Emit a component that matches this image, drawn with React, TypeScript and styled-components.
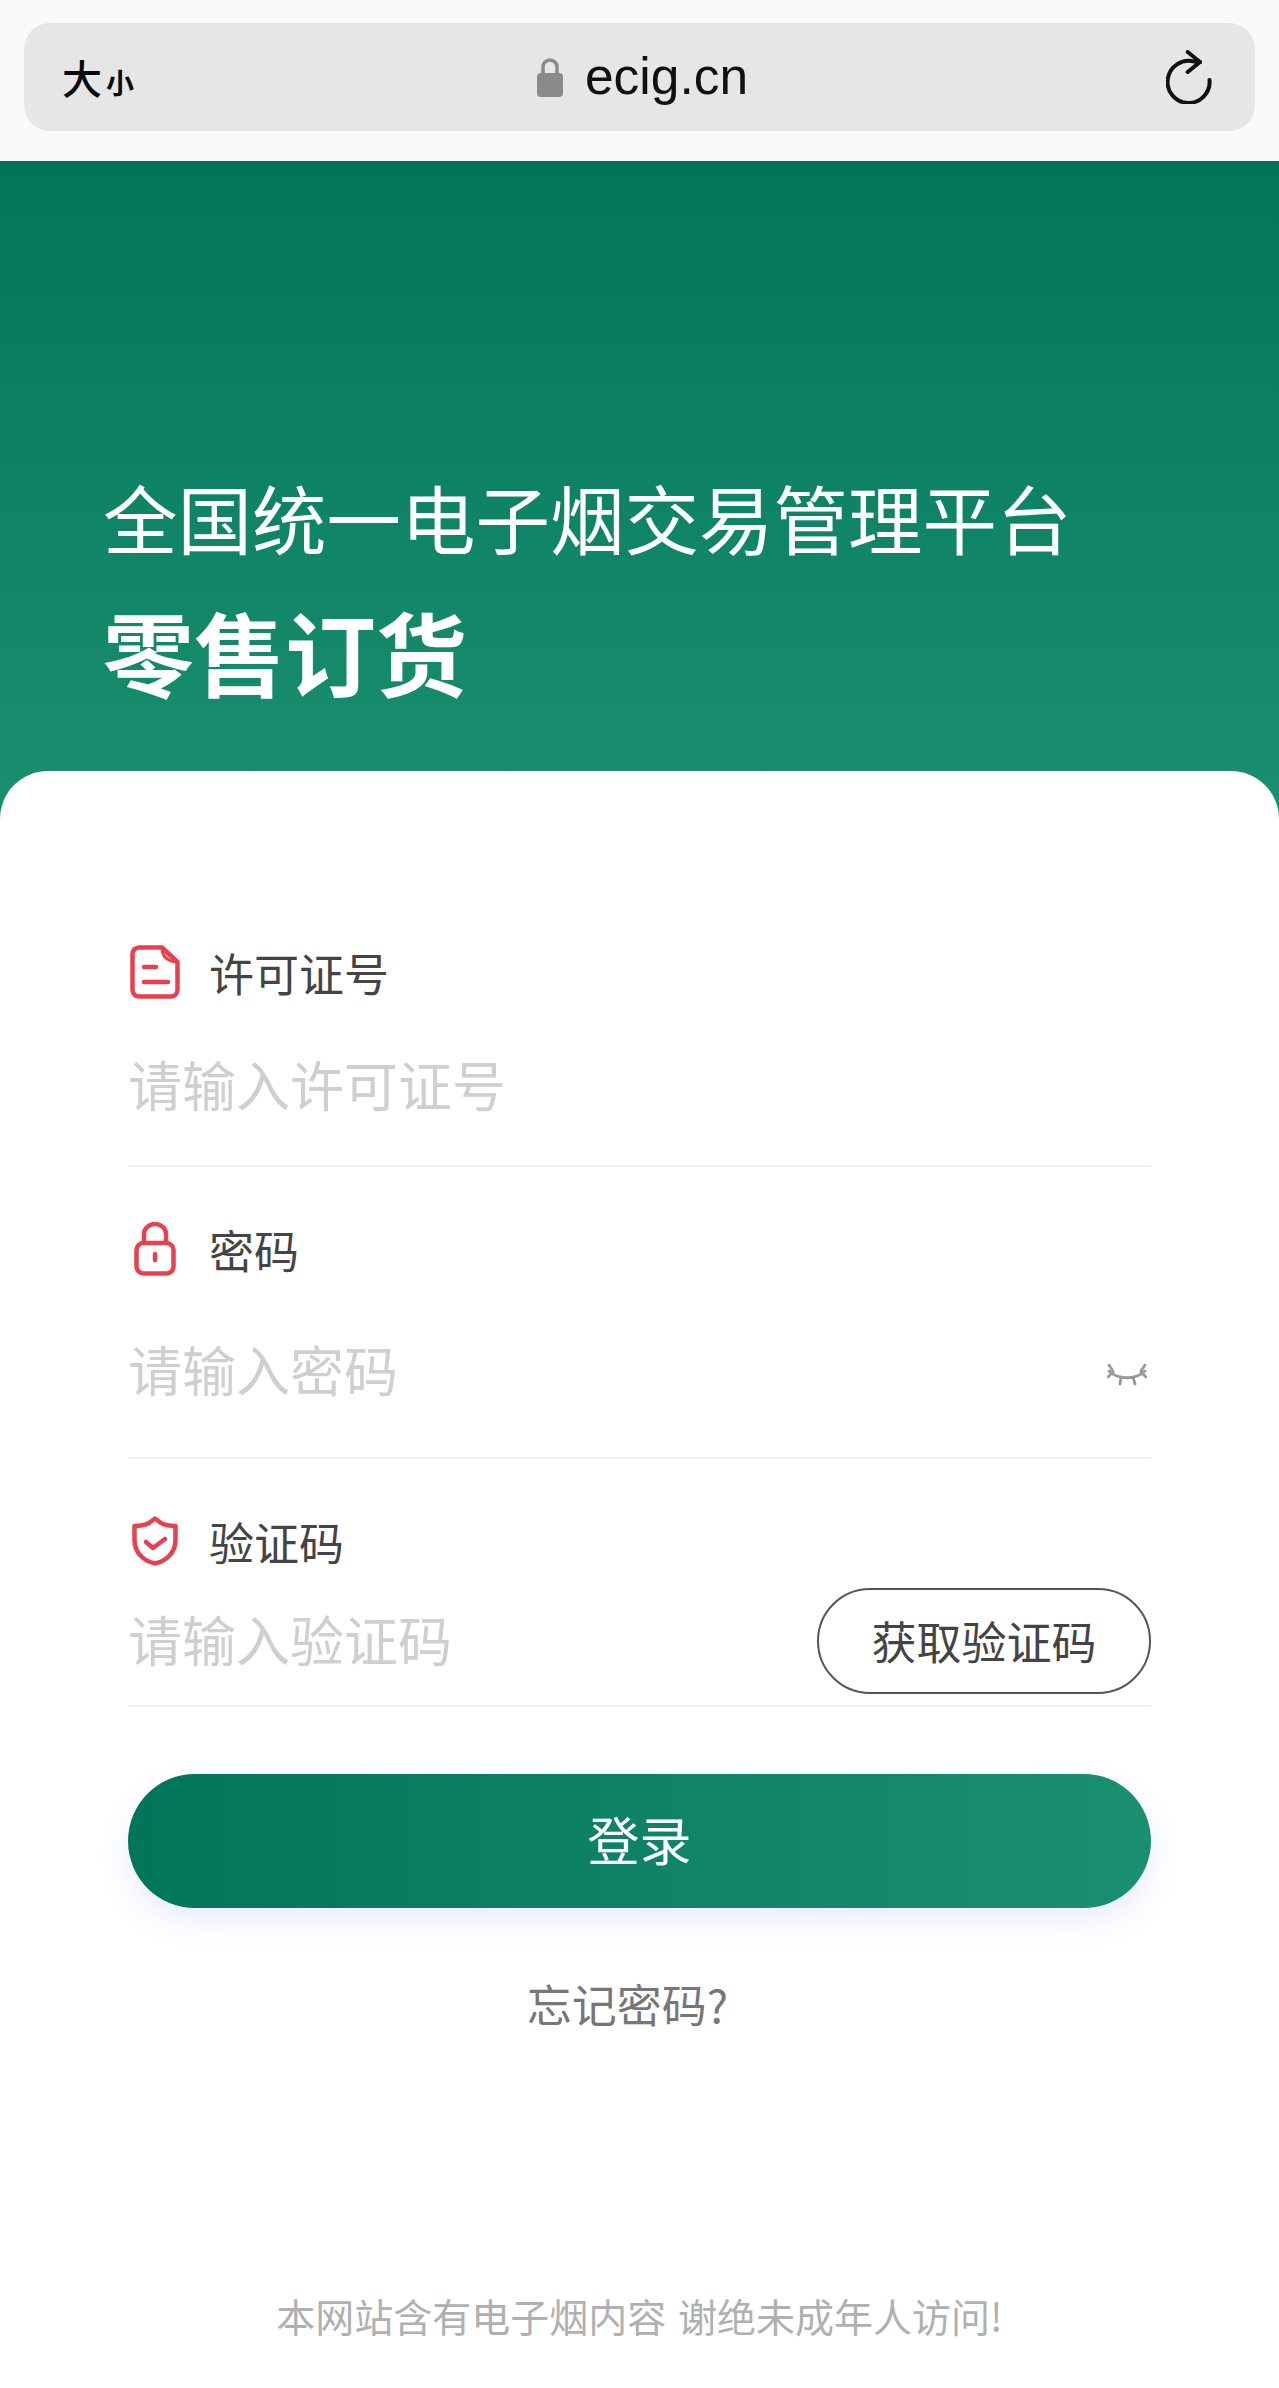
import React from 'react';
import styled, { createGlobalStyle } from 'styled-components';

const GlobalStyle = createGlobalStyle`
  html, body {
    margin: 0;
    padding: 0;
    background: #fff;
  }
  body {
    font-family: "Noto Sans CJK SC", "Liberation Sans", sans-serif;
  }
  * {
    box-sizing: border-box;
  }
`;

const Page = styled.div`
  width: 1279px;
  min-height: 2388px;
  background: #fff;
  overflow: hidden;
`;

const BrowserBar = styled.header`
  height: 161px;
  padding: 23px 24px 0;
  background: #fafafa;
`;

const AddressBar = styled.div`
  height: 108px;
  padding: 0 42px 0 38px;
  display: grid;
  grid-template-columns: 1fr auto 1fr;
  align-items: center;
  background: #e6e6e6;
  border-radius: 26px;
`;

const TextSize = styled.div`
  display: flex;
  align-items: baseline;
  color: #0a0a0a;
  line-height: 1;
`;

const BigChar = styled.span`
  font-size: 40px;
  font-weight: 500;
`;

const SmallChar = styled.span`
  margin-left: 4px;
  font-size: 28px;
  font-weight: 700;
`;

const Domain = styled.div`
  display: flex;
  align-items: center;
  gap: 22px;
  margin-left: 10px;
  font-family: "Liberation Sans", sans-serif;
  font-size: 51.5px;
  line-height: 1;
  color: #111;
`;

const Reload = styled.div`
  display: flex;
  justify-content: flex-end;
`;

const Hero = styled.section`
  height: 658px;
  padding: 314px 0 0 103px;
  background: linear-gradient(180deg, #00755a 0%, #1b9070 100%);
  color: #fff;
`;

const HeroTitle = styled.h1`
  margin: 0;
  font-size: 74.5px;
  line-height: 84px;
  font-weight: 400;
`;

const HeroSubtitle = styled.h2`
  margin: 43px 0 0;
  font-size: 91px;
  line-height: 96px;
  font-weight: 700;
`;

const Card = styled.main`
  position: relative;
  margin-top: -48px;
  padding: 171px 128px 0;
  background: #fff;
  border-radius: 48px 48px 0 0;
`;

const Field = styled.div<{ $gap?: number }>`
  margin-top: ${(p) => p.$gap ?? 0}px;
`;

const Label = styled.label`
  height: 60px;
  display: flex;
  align-items: center;
  color: #444;
  font-size: 45px;
  font-weight: 400;
  line-height: 1;
`;

const LabelIcon = styled.span`
  width: 81px;
  display: flex;
  justify-content: center;
  padding-right: 28px;
`;

const InputRow = styled.div<{ $height: number }>`
  height: ${(p) => p.$height}px;
  display: flex;
  align-items: center;
  border-bottom: 2px solid #efefef;
`;

const Input = styled.input`
  flex: 1;
  min-width: 0;
  padding: 0;
  border: 0;
  outline: 0;
  background: transparent;
  font-family: inherit;
  font-size: 54px;
  font-weight: 400;
  color: #333;

  &::placeholder {
    color: #cfcfcf;
    opacity: 1;
  }
`;

const EyeToggle = styled.span`
  display: flex;
  margin-top: 14px;
  padding-right: 4px;
`;

const CodeButton = styled.button`
  width: 334px;
  height: 106px;
  margin-top: 5px;
  padding: 0;
  background: #fff;
  border: 2px solid #555;
  border-radius: 53px;
  font-family: inherit;
  font-size: 45px;
  color: #444;
`;

const LoginButton = styled.button`
  display: block;
  width: 100%;
  height: 134px;
  margin-top: 67px;
  padding: 0 0 5px;
  border: 0;
  border-radius: 67px;
  background: linear-gradient(90deg, #00755a 0%, #1b9070 100%);
  box-shadow: 0 14px 30px rgba(90, 110, 255, 0.13);
  color: #fff;
  font-family: inherit;
  font-size: 52px;
  font-weight: 400;
`;

const ForgotLink = styled.div`
  margin-top: 66px;
  padding-right: 24px;
  text-align: center;
  color: #777;
  font-size: 45px;
  line-height: 60px;
  font-weight: 400;
`;

const Footer = styled.footer`
  margin-top: 251px;
  text-align: center;
  color: #b0b0b0;
  font-size: 39px;
  line-height: 60px;
  font-weight: 400;
  word-spacing: 3px;
`;

const LockGlyph = () => (
  <svg width="26" height="39" viewBox="0 0 26 39">
    <path d="M6 17V9a7 7 0 0 1 14 0v8" fill="none" stroke="#8a8a8a" strokeWidth="3.5" />
    <rect x="0" y="15" width="26" height="24" rx="4" fill="#8a8a8a" />
  </svg>
);

const ReloadGlyph = () => (
  <svg width="47" height="54" viewBox="0 0 47 54" fill="none" stroke="#111" strokeWidth="4" strokeLinecap="round" strokeLinejoin="round">
    <path d="M43.5 30A21 21 0 1 1 28 11.6L34 12" />
    <path d="M21.7 2L34 12 21.7 22" />
  </svg>
);

const DocIcon = () => (
  <svg width="50" height="54" viewBox="0 0 50 54" fill="none" stroke="#e8404e" strokeWidth="4.5" strokeLinecap="round" strokeLinejoin="round">
    <path d="M32 2.5H9A6.5 6.5 0 0 0 2.5 9v36A6.5 6.5 0 0 0 9 51.5h32a6.5 6.5 0 0 0 6.5-6.5V17L32 2.5z" />
    <path d="M32 3c0 9 5 13 15 14" strokeWidth="3" />
    <path d="M14 22h12M14 37h24" />
  </svg>
);

const PadlockIcon = () => (
  <svg width="42" height="54" viewBox="0 0 42 54" fill="none" stroke="#e8404e" strokeWidth="4.5" strokeLinecap="round" strokeLinejoin="round">
    <rect x="2.5" y="21" width="37" height="30.5" rx="7" />
    <path d="M10 21V12a11 10 0 0 1 22 0v9" />
    <path d="M21 32v6" />
  </svg>
);

const ShieldIcon = () => (
  <svg width="46" height="50" viewBox="0 0 46 50" fill="none" stroke="#e8404e" strokeWidth="4.5" strokeLinecap="round" strokeLinejoin="round">
    <path d="M23 2.5l6 4.5c4 2 9 3 14.5 3v14C43.5 37 34 45 23 47.5 12 45 2.5 37 2.5 24V10C8 10 13 9 17 7l6-4.5z" />
    <path d="M14 26l7 6 12-9" />
  </svg>
);

const EyeClosedIcon = () => (
  <svg width="40" height="22" viewBox="0 0 40 22" fill="none" stroke="#999" strokeWidth="2.8" strokeLinecap="round">
    <path d="M2 7c9 9 27 9 36 0" />
    <path d="M2 1l4 6M38 1l-4 6M1 13l5-5M39 13l-5-5M14 13l-1 7M26 13l2 7" />
  </svg>
);

export default function App() {
  return (
    <Page>
      <GlobalStyle />
      <BrowserBar>
        <AddressBar>
          <TextSize>
            <BigChar>大</BigChar>
            <SmallChar>小</SmallChar>
          </TextSize>
          <Domain>
            <LockGlyph />
            ecig.cn
          </Domain>
          <Reload>
            <ReloadGlyph />
          </Reload>
        </AddressBar>
      </BrowserBar>

      <Hero>
        <HeroTitle>全国统一电子烟交易管理平台</HeroTitle>
        <HeroSubtitle>零售订货</HeroSubtitle>
      </Hero>

      <Card>
        <Field>
          <Label>
            <LabelIcon><DocIcon /></LabelIcon>
            许可证号
          </Label>
          <InputRow $height={165}>
            <Input placeholder="请输入许可证号" />
          </InputRow>
        </Field>

        <Field $gap={52}>
          <Label>
            <LabelIcon><PadlockIcon /></LabelIcon>
            密码
          </Label>
          <InputRow $height={180}>
            <Input type="password" placeholder="请输入密码" />
            <EyeToggle><EyeClosedIcon /></EyeToggle>
          </InputRow>
        </Field>

        <Field $gap={52}>
          <Label>
            <LabelIcon><ShieldIcon /></LabelIcon>
            验证码
          </Label>
          <InputRow $height={136}>
            <Input placeholder="请输入验证码" />
            <CodeButton>获取验证码</CodeButton>
          </InputRow>
        </Field>

        <LoginButton>登录</LoginButton>
        <ForgotLink>忘记密码?</ForgotLink>
        <Footer>本网站含有电子烟内容 谢绝未成年人访问!</Footer>
      </Card>
    </Page>
  );
}
